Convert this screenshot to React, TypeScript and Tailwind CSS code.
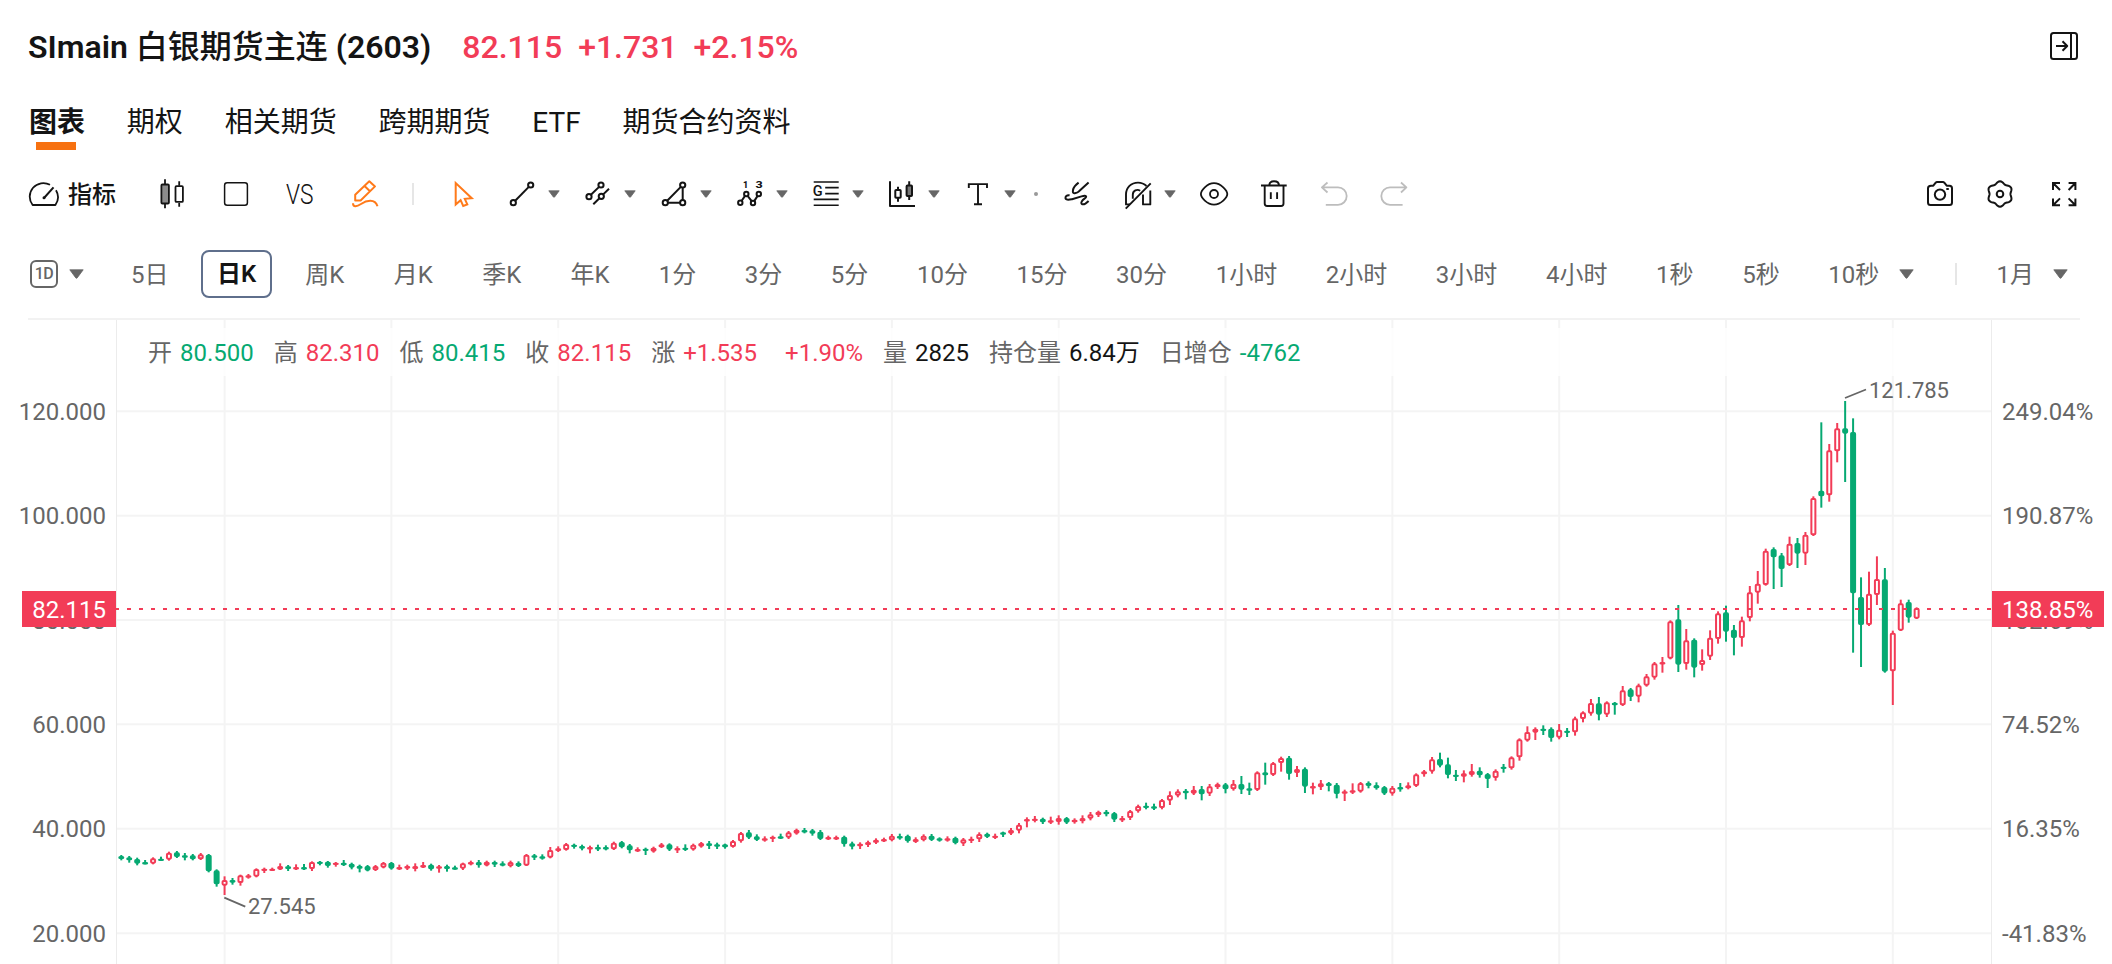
import React from 'react';
import clsx from 'clsx';

type Direction = 'up' | 'down';

interface Candle {
  direction: Direction;
  x: number;
  high: number;
  top: number;
  bottom: number;
  low: number;
}

const UP = '#f23c57';
const DOWN = '#06a972';

const FIRST_X = 121.3;
const STEP = 7.944;

// Each row is "direction high top bottom low" in thirds of a pixel below `base`.
const SERIES = [
  {
    base: 800,
    rows: `g 165 168 177 181|g 168 172 181 188|g 173 177 191 196|g 180 186 191 193|r 172 175 191 193|g 170 176 180 183
r 155 158 179 182|g 153 157 171 174|g 159 166 171 181|g 162 166 178 181|r 159 163 178 180|g 162 164 214 217
g 208 211 253 260|r 229 240 257 285|g 234 240 248 254|r 224 226 249 257|r 222 226 230 236|r 205 207 230 232
r 203 206 212 219|r 203 206 210 213|r 190 198 209 210|g 195 199 207 213|r 193 201 208 210|g 192 201 208 210
r 184 186 207 213|g 183 185 190 196|g 183 185 198 203|r 186 188 193 200|g 180 188 196 198|g 188 191 203 208
g 194 197 206 217|g 195 198 212 214|r 195 198 211 213|r 186 188 203 205|g 186 188 206 209|r 194 201 205 210
r 194 198 206 210|r 190 198 207 214|r 186 195 203 204|g 191 194 208 212|r 195 199 206 218|g 194 198 207 215
g 197 202 206 209|r 188 190 206 210|r 182 186 193 196|g 180 186 196 203|r 182 185 197 199|g 182 186 194 201
g 184 190 196 199|r 182 186 199 202|g 184 188 199 201|r 162 164 197 198|g 162 166 173 180|g 163 169 174 179
r 141 150 173 175|r 139 145 153 156|r 129 132 150 152|g 131 134 141 146|g 134 138 146 151|r 137 141 146 160
g 134 141 146 153|g 136 141 146 151|r 125 128 148 150|g 123 126 142 145|g 132 136 151 160|r 142 147 152 156
g 143 146 152 165|r 140 143 155 158|r 129 133 142 144|g 130 133 149 153|r 139 144 149 159|g 133 143 149 153
r 131 134 149 152`,
  },
  {
    base: 740,
    rows: `r 306 309 320 323|g 303 310 318 327|g 308 313 318 327|g 311 313 322 326|r 300 303 321 323|r 276 279 304 308
g 270 277 293 297|g 283 289 300 303|r 289 295 300 305|r 287 290 296 306|g 281 289 294 297|r 273 277 293 297
r 266 269 281 284|g 264 270 276 280|g 267 271 281 287|g 270 275 297 300|r 287 291 296 300|r 287 291 296 300
g 287 290 313 320|g 305 310 320 328|r 307 311 319 327|r 302 306 315 321|r 295 299 308 312|r 293 297 302 306
r 282 287 301 304|g 281 288 293 299|g 284 287 304 308|r 292 297 306 309|r 283 287 301 304|g 282 287 300 303
g 292 295 300 305|r 289 295 300 305|g 290 293 310 313|r 294 298 311 318|r 290 296 302 309|r 277 282 298 306
g 278 281 291 294|r 281 287 292 297|g 275 277 282 291|r 264 270 281 285|r 249 254 272 280|r 232 237 242 262
r 228 236 241 247|g 233 236 247 252|r 230 241 248 252|r 226 234 246 254|g 231 234 248 252|r 235 239 247 251
r 226 234 244 250|r 216 223 236 241|r 212 215 226 231|g 210 215 223 229|g 216 219 239 246|r 228 234 239 246
r 210 213 234 240|r 194 198 214 218|g 188 197 202 208|g 191 199 204 210|r 177 180 204 208|r 154 165 182 195
r 148 154 167 172|g 147 152 160 178|r 138 149 161 165|g 138 147 163 181|r 132 139 161 168|r 128 132 142 147
g 129 133 148 160`,
  },
  {
    base: 660,
    rows: `r 360 371 388 392|g 348 372 389 402|g 368 385 390 405|r 334 337 390 393|g 308 337 346 374|r 306 309 345 348
r 290 294 309 335|g 288 293 342 359|r 318 327 339 351|g 322 326 380 399|r 368 378 383 403|r 360 370 382 390
g 366 369 378 394|g 369 374 402 415|r 389 394 401 423|r 370 391 398 402|r 366 369 395 398|g 364 368 378 385
g 367 375 385 389|g 378 381 401 405|r 378 383 401 407|g 369 381 386 395|r 367 376 385 388|r 340 343 378 381
r 330 334 343 350|r 291 298 335 341|g 278 297 317 322|g 293 313 345 355|g 330 344 350 363|r 331 340 350 367
r 312 333 345 350|g 322 332 346 353|g 339 342 357 384|r 328 332 354 362|g 312 320 325 338|r 289 292 325 329
r 235 238 292 302|r 199 216 242 245|r 202 206 218 240|g 196 206 212 225|g 202 206 234 245|r 192 209 233 238
g 204 212 218 231|r 170 175 217 227|r 154 157 177 187|r 117 129 161 167|g 111 130 164 181`,
  },
  {
    base: 540,
    rows: `r 484 487 524 531|g 486 488 496 524|r 438 451 496 498|g 444 448 471 483|r 431 436 470 487|r 402 409 437 440
r 366 370 413 419|r 351 366 372 398|r 241 244 356 358|g 195 238 374 396|r 267 301 372 389|g 295 299 383 412
r 328 360 375 392|r 271 293 350 360|r 214 220 297 311|g 197 217 275 305|g 255 269 294 346|r 230 241 294 320
r 138 157 234 244|r 93 131 158 191|r 26 32 135 137`,
  },
  {
    base: 370,
    rows: `g 532 537 562 657|g 549 556 597 651|r 500 521 586 588|g 504 519 551 594|r 486 494 551 585|r 379 384 496 498
g 157 362 379 413|r 222 241 376 395|r 159 175 244 277|g 93 175 191 336|g 145 186 670 848|g 622 681 765 891
r 605 671 765 768|r 559 627 675 705|g 594 628 905 908|r 782 788 904 1005|r 689 700 782 783|g 689 696 743 758
r 712 714 746 747`,
  },
];

const CANDLES: Candle[] = SERIES.flatMap(({ base, rows }) =>
  rows.split(/[|\n]/).map((row) => {
    const [side, ...values] = row.trim().split(' ');
    const [high, top, bottom, low] = values.map((v) => base + Number(v) / 3);
    return { direction: (side === 'r' ? 'up' : 'down') as Direction, high, top, bottom, low };
  })
).map((candle, index) => ({ ...candle, x: FIRST_X + index * STEP }));

const TABS = ['图表', '期权', '相关期货', '跨期期货', 'ETF', '期货合约资料'];

const PERIODS = [
  '5日', '日K', '周K', '月K', '季K', '年K', '1分', '3分', '5分', '10分', '15分',
  '30分', '1小时', '2小时', '3小时', '4小时', '1秒', '5秒', '10秒',
];

const AXIS = [
  { y: 411.3, price: '120.000', percent: '249.04%' },
  { y: 515.7, price: '100.000', percent: '190.87%' },
  { y: 620, price: '80.000', percent: '132.69%' },
  { y: 724.3, price: '60.000', percent: '74.52%' },
  { y: 828.8, price: '40.000', percent: '16.35%' },
  { y: 933.2, price: '20.000', percent: '-41.83%' },
];

const GRID_X = [224.6, 391.4, 558.2, 725.1, 891.9, 1058.7, 1225.5, 1392.4, 1559.2, 1726, 1892.8];

const LEGEND = [
  { label: '开', value: '80.500', color: 'text-[#06a972]' },
  { label: '高', value: '82.310', color: 'text-[#f23c57]' },
  { label: '低', value: '80.415', color: 'text-[#06a972]' },
  { label: '收', value: '82.115', color: 'text-[#f23c57]' },
  { label: '涨', value: '+1.535', color: 'text-[#f23c57]' },
  { label: '', value: '+1.90%', color: 'text-[#f23c57]' },
  { label: '量', value: '2825', color: 'text-[#141414]' },
  { label: '持仓量', value: '6.84万', color: 'text-[#141414]' },
  { label: '日增仓', value: '-4762', color: 'text-[#06a972]' },
];

function gearPath() {
  const points = Array.from({ length: 72 }, (_, i) => {
    const angle = (i / 72) * Math.PI * 2;
    const r = 11.6 + 1.15 * Math.cos(angle * 6);
    return `${(16 + r * Math.sin(angle)).toFixed(2)} ${(16 - r * Math.cos(angle)).toFixed(2)}`;
  });
  return `M${points.join('L')}Z`;
}

interface IconProps {
  className?: string;
  width?: number;
  children: React.ReactNode;
}

function Icon({ className, width = 1.8, children }: IconProps) {
  return (
    <svg
      viewBox="0 0 32 32"
      fill="none"
      stroke="currentColor"
      strokeWidth={width}
      strokeLinejoin="round"
      className={clsx('w-8 h-8 flex-shrink-0', className)}
    >
      {children}
    </svg>
  );
}

function SmallArrow() {
  return (
    <svg viewBox="0 0 12 8" className="w-3 h-2 ml-2.5 flex-shrink-0">
      <path d="M0.8 0.8h10.4L6.6 7q-.6.6-1.2 0Z" fill="#666" stroke="#666" strokeWidth="0.8" strokeLinejoin="round" />
    </svg>
  );
}

function PeriodArrow({ className }: { className?: string }) {
  return (
    <svg viewBox="0 0 15 10" className={clsx('w-[15px] h-2.5 flex-shrink-0', className)}>
      <path d="M0.8 0.8h13.4L8.2 8.9q-.7.7-1.4 0Z" fill="#666" stroke="#666" strokeWidth="0.8" strokeLinejoin="round" />
    </svg>
  );
}

function TitleRow() {
  return (
    <div className="h-[92px] pl-7 pr-8 flex items-center font-medium text-[32px]">
      <h1 className="pt-0.5 font-semibold whitespace-pre text-[#141414]">
        SImain <span className="font-medium">白银期货主连</span> (2603)
      </h1>
      <div className="pt-0.5 flex gap-4 ml-[31px] text-[#f23c57]">
        <span>82.115</span>
        <span>+1.731</span>
        <span>+2.15%</span>
      </div>
      <Icon className="ml-auto" width={2}>
        <rect x="3" y="3" width="26" height="26" rx="2.5" />
        <path d="M23 3v26M8 16h11M14.5 11.3l4.7 4.7-4.7 4.7" />
      </Icon>
    </div>
  );
}

function TabRow() {
  return (
    <div className="h-[60px] pt-0.5 pl-[29px] flex items-center gap-[41.8px] text-[28px]">
      {TABS.map((tab, index) => (
        <div key={tab} className={clsx('relative', index === 0 && 'font-bold')}>
          {tab}
          {index === 0 && <span className="absolute left-[7px] top-10 w-10 h-2 bg-[#f77110]" />}
        </div>
      ))}
    </div>
  );
}

function Toolbar() {
  return (
    <div className="h-[84px] pl-7 pr-8 flex items-center">
      <Icon>
        <path d="M22 6.8A13.6 13.6 0 0 0 4.6 27H27.4A13.6 13.6 0 0 0 28 12.3" />
        <path d="M25.5 9.3L16 20" strokeWidth="2" />
        <circle cx="16" cy="19.8" r="1.5" fill="currentColor" stroke="none" />
      </Icon>
      <span className="ml-2 pt-0.5 text-2xl font-medium">指标</span>
      <Icon className="ml-10">
        <path d="M9 1.3v29M23.2 3.3v4.5M23.2 25v3.7" />
        <rect x="5.4" y="6.5" width="7.5" height="19" rx="1" fill="#8c8c8c" />
        <rect x="19.5" y="8.2" width="7.4" height="15.7" rx="1" />
      </Icon>
      <Icon className="ml-8" width={1.5}>
        <rect x="4.6" y="4.8" width="22.8" height="22.4" rx="2.5" />
      </Icon>
      <svg viewBox="0 0 32 32" className="w-8 h-8 ml-8 flex-shrink-0 overflow-visible">
        <text x="2" y="26" fontSize="28" fontWeight="300" textLength="27.5" lengthAdjust="spacingAndGlyphs" fill="currentColor">
          VS
        </text>
      </svg>
      <Icon className="ml-8 text-[#ff7a1a]" width={2}>
        <path d="M21.3 3.2L27 8.4 12.6 22.5H7.2V16.7ZM16.8 8.2L22 13.2" />
        <path d="M5 25.2C5 29.3 8.7 28.8 13 26 18.5 22.3 27 20.5 29.5 28.2" />
      </Icon>
      <span className="ml-8 w-0.5 h-[22px] bg-[#e6e6e6]" />
      <Icon className="ml-8 text-[#ff7a1a]" width={2}>
        <path d="M9.7 5V26.5L14.6 22.2 17.2 28 21.3 26.4 18.8 20.8 25.8 20.2Z" strokeLinejoin="miter" />
      </Icon>

      <Icon className="ml-7" width={2}>
        <circle cx="7.3" cy="24.7" r="2.6" />
        <circle cx="24.7" cy="7" r="2.6" />
        <path d="M9.2 22.8L22.8 8.9" />
      </Icon>
      <SmallArrow />
      <Icon className="ml-[22px]" width={2}>
        <circle cx="7" cy="18.7" r="2.6" />
        <circle cx="19" cy="7" r="2.6" />
        <circle cx="19.3" cy="18.3" r="2.6" />
        <path d="M8.9 16.8L17.1 8.9M11.3 26.3L17.4 20.2M21.2 16.4L27 10.7" />
      </Icon>
      <SmallArrow />
      <Icon className="ml-[22px]" width={2}>
        <circle cx="7.3" cy="24.7" r="2.6" />
        <circle cx="24.7" cy="7" r="2.6" />
        <circle cx="24.7" cy="24.7" r="2.6" />
        <path d="M9.2 22.8L22.8 8.9M24.7 9.6V22.1M9.9 24.7H22.1" />
      </Icon>
      <SmallArrow />
      <Icon className="ml-[22px]" width={2}>
        <circle cx="6.3" cy="24.8" r="2.2" />
        <circle cx="12.3" cy="16" r="2.2" />
        <circle cx="19" cy="25" r="2.2" />
        <circle cx="24.8" cy="16" r="2.2" />
        <path d="M7.5 23L11 17.9M13.6 17.9L17.7 23.1M20.2 23.1L23.6 17.9" />
        <text x="9" y="10.2" fontSize="9" fontWeight="800" fill="currentColor" stroke="none">1</text>
        <text x="21.4" y="10.2" fontSize="9" fontWeight="800" fill="currentColor" stroke="none" textLength="7.2" lengthAdjust="spacingAndGlyphs">3</text>
      </Icon>
      <SmallArrow />
      <Icon className="ml-[22px]" width={1.6}>
        <path d="M3.7 4H28.7M15.2 9.6H28.7M15.2 15.6H28.7M3.7 21.4H28.7M3.7 27.2H28.7" />
        <text x="2.8" y="17.5" fontSize="14.5" fontWeight="500" fill="currentColor" stroke="none">G</text>
      </Icon>
      <SmallArrow />
      <Icon className="ml-[22px]" width={2}>
        <path d="M4 3.3V28H29M12 8.7V11.5M12 20V23.7M23.2 3.3V22" />
        <rect x="9.3" y="12" width="5.4" height="7.8" rx="0.8" />
        <rect x="20.6" y="7.6" width="5.4" height="10.4" rx="0.8" fill="#777" />
      </Icon>
      <SmallArrow />
      <Icon className="ml-[22px]" width={1.9}>
        <path d="M6.8 10V6.1H25V10M16 6.1V26.2M12 26.2H20" strokeLinejoin="miter" />
      </Icon>
      <SmallArrow />
      <span className="ml-[18px] w-1 h-1 rounded-full bg-[#999]" />
      <Icon className="ml-[22px]" width={2}>
        <path d="M18.6 4.6C16 6.5 13.6 9 13 12 12.6 14.5 13 15.5 14.8 15.2 17 14.8 18 14.4 19 13.3L28.6 4.5" />
        <path d="M9.6 17.2C6.5 16.8 5.2 18.5 5.5 20.3 6 22.5 9 21.8 12 21.2L21.5 18.4C26.5 17 27.4 18.5 24.5 20.6 22 22.5 20.6 24.5 21.6 25.7 23 27 25.8 25.8 28.6 23" />
      </Icon>
      <Icon className="ml-[30px]" width={1.9}>
        <path d="M8 26.4H4V16.5C4 9.5 9.2 4.6 16 4.6 19.3 4.6 22.3 5.9 24.5 8" />
        <path d="M28.3 12.5V26.4H21V16.5M10.8 20.8V16.8C10.8 12.6 15 10.8 18.2 12.7M3.7 30.6L28.7 5.3" />
      </Icon>
      <SmallArrow />
      <Icon className="ml-[22px]">
        <path d="M2.9 16C2.9 12.5 9 5.2 16 5.2S29.3 12.5 29.3 16 23 26.6 16 26.6 2.9 19.5 2.9 16Z" />
        <circle cx="16" cy="16" r="4" />
      </Icon>
      <Icon className="ml-7" width={1.9}>
        <path d="M3 7.5H28.7M11.3 7.5C11.3 4.7 12.8 3.2 16 3.2S21 4.7 21 7.5" />
        <path d="M6.7 7.5V25.5Q6.7 28 9.2 28H23Q25.5 28 25.5 25.5V7.5M12.8 14.2V21M19.1 14.2V21" />
      </Icon>
      <Icon className="ml-7 text-[#bdbdbd]">
        <path d="M9.5 4.5L3.9 9.4 9.5 14.5M3.9 9.4H20A8.7 8.7 0 0 1 20 26.8H7.8" />
      </Icon>
      <Icon className="ml-7 text-[#bdbdbd]">
        <path d="M23 4.5L28.4 9.4 23 14.5M28.4 9.4H12A8.7 8.7 0 0 0 12 26.8H24.6" />
      </Icon>

      <Icon className="ml-auto" width={2}>
        <path d="M7 7.7H9.3L11.7 4.7Q12.3 4.1 13 4.1H19Q19.7 4.1 20.3 4.7L22.7 7.7H25.5Q28 7.7 28 10.2V24.6Q28 27.1 25.5 27.1H6.5Q4 27.1 4 24.6V10.2Q4 7.7 7 7.7Z" />
        <circle cx="16" cy="16.6" r="5.2" />
        <path d="M22.3 11H24.8" />
      </Icon>
      <Icon className="ml-7" width={2}>
        <path d={gearPath()} />
        <circle cx="16" cy="16" r="3.3" />
      </Icon>
      <Icon className="ml-8" width={2}>
        <path
          d="M5 12V5H12M5 5L12 12M20.6 5H27.4V12M27.4 5L20.6 12M5 20.4V27.2H12M5 27.2L12 20.4M20.6 27.2H27.4V20.4M27.4 27.2L20.6 20.4"
          strokeLinejoin="miter"
        />
      </Icon>
    </div>
  );
}

function PeriodRow() {
  return (
    <div className="h-[76px] mb-1.5 pl-[30px] pr-11 flex items-center text-2xl text-[#666]">
      <span className="w-7 h-7 border-2 border-[#666] rounded-md flex items-center justify-center text-base font-medium tracking-[-0.5px]">
        1D
      </span>
      <PeriodArrow className="ml-[11px]" />
      <div className="ml-[47px] flex items-center gap-[48.6px]">
        {PERIODS.map((period) => (
          <span
            key={period}
            className={clsx(
              'whitespace-nowrap',
              period === '日K'
                ? 'h-12 -mx-4 px-3.5 flex items-center border-2 border-[#5f6f8c] rounded-lg font-semibold text-[#141414]'
                : 'pt-px',
              period.endsWith('K') && period !== '日K' && 'px-[0.4px]'
            )}
          >
            {period}
          </span>
        ))}
      </div>
      <PeriodArrow className="ml-5" />
      <span className="ml-auto w-0.5 h-[22px] bg-[#e6e6e6]" />
      <span className="ml-10 pt-px">1月</span>
      <PeriodArrow className="ml-[19px]" />
    </div>
  );
}

function CandleMark({ candle }: { candle: Candle }) {
  const { direction, x, high, top, bottom, low } = candle;
  const color = direction === 'up' ? UP : DOWN;
  const height = Math.max(bottom - top, 2.4);

  return (
    <g>
      <line x1={x} x2={x} y1={high} y2={low} stroke={color} strokeWidth="2" />
      <rect
        x={x - 2}
        y={top + 1}
        width="4"
        height={Math.max(height - 2, 0.4)}
        rx="0.8"
        fill={direction === 'up' ? '#fff' : color}
        stroke={color}
        strokeWidth="2"
      />
    </g>
  );
}

function Chart() {
  return (
    <div className="relative h-[644px]">
      <svg viewBox="0 320 2112 644" className="block w-[2112px] h-[644px]">
        <g stroke="#f4f4f4" strokeWidth="2">
          {GRID_X.map((x) => (
            <line key={x} x1={x} x2={x} y1="320" y2="964" />
          ))}
          {AXIS.map(({ y }) => (
            <line key={y} x1="116" x2="1992" y1={y} y2={y} />
          ))}
        </g>
        <path d="M116.5 320V964M1991.5 320V964" stroke="#ececec" />

        {CANDLES.map((candle) => (
          <CandleMark key={candle.x} candle={candle} />
        ))}
        <path d="M115 609H1992" stroke={UP} strokeWidth="2" strokeDasharray="4 8" />

        <g fontSize="24" fill="#666">
          {AXIS.map(({ y, price, percent }) => (
            <React.Fragment key={price}>
              <text x="106" y={y + 8.5} textAnchor="end">{price}</text>
              <text x="2002" y={y + 8.5}>{percent}</text>
            </React.Fragment>
          ))}
        </g>

        <path d="M224.3 897.7L245.3 906.7M1845 398L1866 389.5" stroke="#666" strokeWidth="1.8" />
        <g fontSize="22" fill="#666">
          <text x="248" y="914">27.545</text>
          <text x="1869" y="398">121.785</text>
        </g>

        <rect x="22" y="591" width="94" height="36" fill={UP} />
        <rect x="1992" y="591" width="112" height="36" fill={UP} />
        <g fontSize="24" fill="#fff">
          <text x="106" y="617.7" textAnchor="end">82.115</text>
          <text x="2002" y="617.7">138.85%</text>
        </g>
      </svg>

      <div className="absolute left-[118px] right-[122px] top-2 h-12 pt-0.5 pl-[30px] flex items-center gap-5 text-2xl bg-white/85">
        {LEGEND.map(({ label, value, color }) => (
          <div key={value} className="flex gap-2 whitespace-nowrap">
            <span className="text-[#666]">{label}</span>
            <span className={color}>{value}</span>
          </div>
        ))}
      </div>
    </div>
  );
}

export default function App() {
  return (
    <div className="w-[2112px] h-[964px] overflow-hidden bg-white text-[#141414] font-['Roboto','Noto_Sans_CJK_SC',sans-serif]">
      <TitleRow />
      <TabRow />
      <Toolbar />
      <PeriodRow />
      <div className="mx-7 mr-8 h-0.5 bg-[#f2f2f2]" />
      <Chart />
    </div>
  );
}
